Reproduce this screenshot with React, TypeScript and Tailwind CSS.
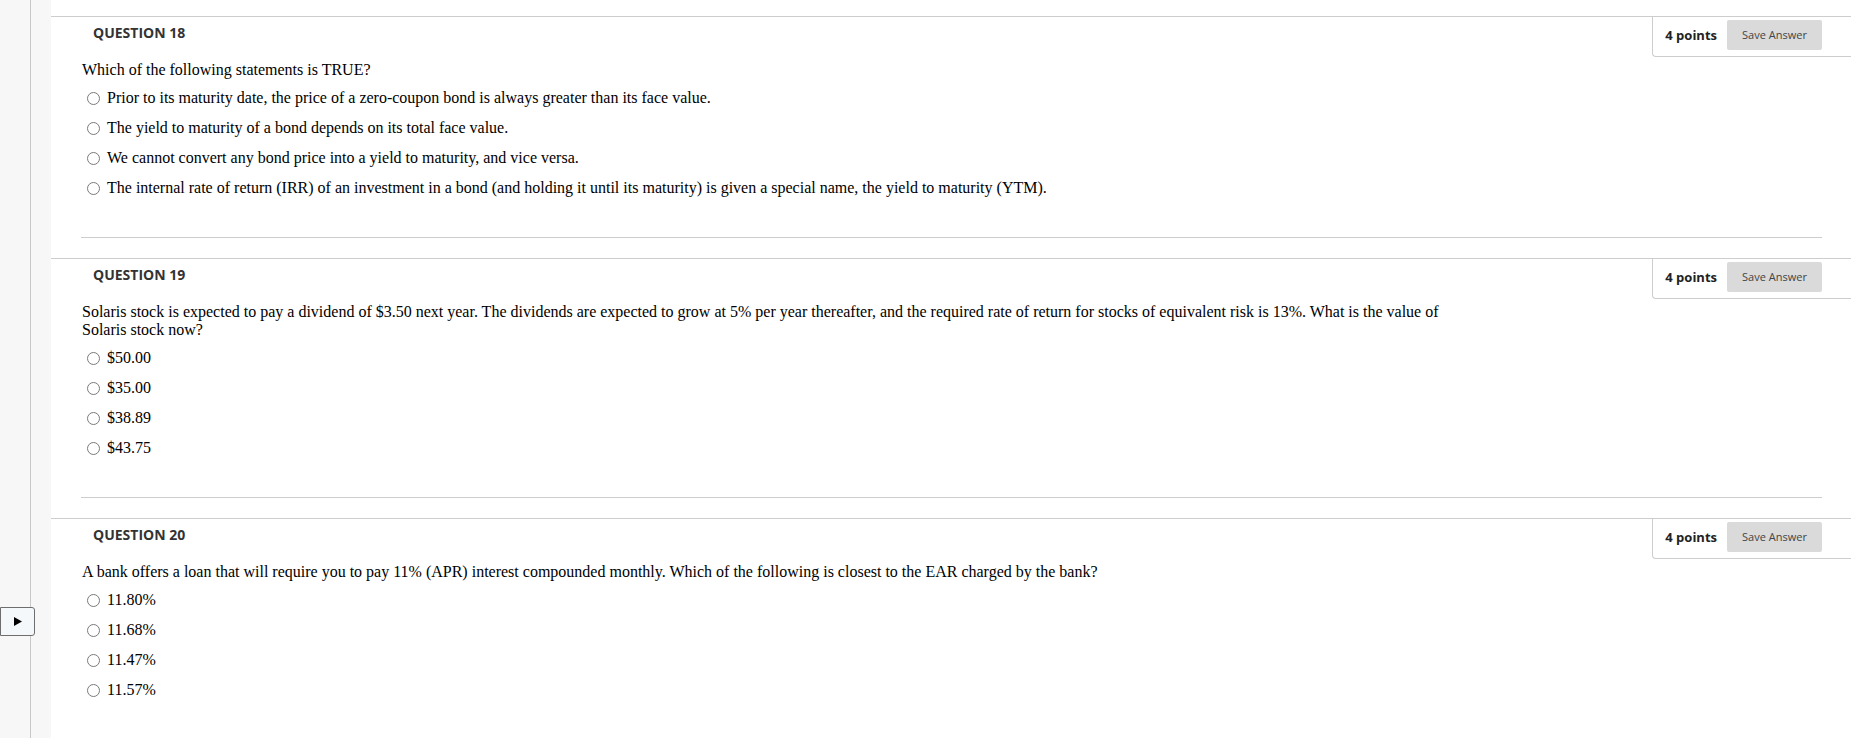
import React from "react";

type Q = { n: number; text: string; options: string[]; last?: boolean };

const questions: Q[] = [
  {
    n: 18,
    text: "Which of the following statements is TRUE?",
    options: [
      "Prior to its maturity date, the price of a zero-coupon bond is always greater than its face value.",
      "The yield to maturity of a bond depends on its total face value.",
      "We cannot convert any bond price into a yield to maturity, and vice versa.",
      "The internal rate of return (IRR) of an investment in a bond (and holding it until its maturity) is given a special name, the yield to maturity (YTM).",
    ],
  },
  {
    n: 19,
    text: "Solaris stock is expected to pay a dividend of $3.50 next year. The dividends are expected to grow at 5% per year thereafter, and the required rate of return for stocks of equivalent risk is 13%. What is the value of Solaris stock now?",
    options: ["$50.00", "$35.00", "$38.89", "$43.75"],
  },
  {
    n: 20,
    text: "A bank offers a loan that will require you to pay 11% (APR) interest compounded monthly. Which of the following is closest to the EAR charged by the bank?",
    options: ["11.80%", "11.68%", "11.47%", "11.57%"],
    last: true,
  },
];

function Question({ q }: { q: Q }) {
  return (
    <div className="border-t border-[#cdcdcd]">
      <div className="flex items-start justify-between h-[40px]">
        <div
          className="pl-[42px] pt-[6px] text-[14px] leading-[20px] font-bold text-[#333333]"
          style={{ fontFamily: '"Open Sans", sans-serif' }}
        >
          QUESTION {q.n}
        </div>
        <div
          className="flex items-center gap-[10px] pl-[12px] pr-[29px] pt-[3px] pb-[6px] border-l border-b border-[#cdcdcd] rounded-bl-[4px]"
          style={{ fontFamily: '"Open Sans", sans-serif' }}
        >
          <span className="text-[13px] font-bold text-[#222222] leading-[18px]">4 points</span>
          <button className="w-[95px] h-[30px] bg-[#dadada] rounded-[2px] text-[11px] text-[#444444]">
            Save Answer
          </button>
        </div>
      </div>
      <div
        className="pl-[31px] mt-[4px] text-[16px] text-black"
        style={{ fontFamily: '"Liberation Serif", "Times New Roman", serif' }}
      >
        <div className="w-[1400px] leading-[18px]">{q.text}</div>
        <div className="mt-[4px] flex flex-col">
          {q.options.map((o) => (
            <div key={o} className="flex items-center h-[30px]">
              <span className="ml-[5px] w-[13px] h-[13px] rounded-full border border-[#7a7a7a] bg-white shrink-0" />
              <span className="ml-[7px] leading-[18px]">{o}</span>
            </div>
          ))}
        </div>
      </div>
      {!q.last && (
        <div className="mt-[34px] mb-[20px] ml-[30px] mr-[29px] border-t border-[#cdcdcd]" />
      )}
    </div>
  );
}

export default function App() {
  return (
    <div className="relative flex w-full h-[738px] overflow-hidden bg-white">
      <div className="w-[31px] shrink-0 bg-[#f7f7f7] border-r border-[#c9c9c9]" />
      <div className="w-[20px] shrink-0 bg-[#f7f7f7]" />
      <div className="flex-1 pt-[16px]">
        {questions.map((q) => (
          <Question key={q.n} q={q} />
        ))}
      </div>
      <button className="absolute left-0 top-[607px] w-[35px] h-[29px] bg-[#f4f8fb] border border-[#6e6e6e] rounded-r-[3px] flex items-center justify-center">
        <svg width="8" height="9" viewBox="0 0 8 9">
          <path d="M0 0 L8 4.5 L0 9 Z" fill="#000" />
        </svg>
      </button>
    </div>
  );
}
